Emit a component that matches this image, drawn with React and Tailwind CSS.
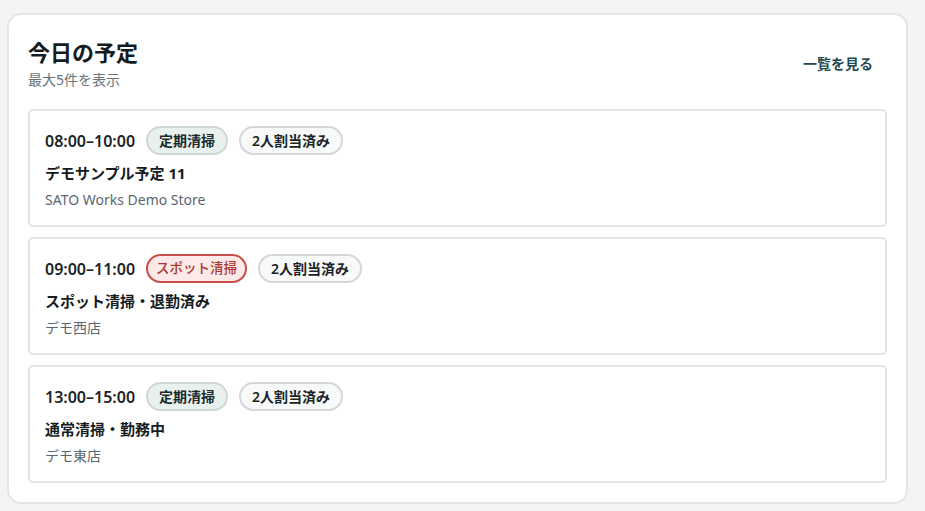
import React from 'react';

const schedules = [
  {
    time: '08:00–10:00',
    kind: '定期清掃',
    spot: false,
    staff: '2人割当済み',
    title: 'デモサンプル予定 11',
    place: 'SATO Works Demo Store',
  },
  {
    time: '09:00–11:00',
    kind: 'スポット清掃',
    spot: true,
    staff: '2人割当済み',
    title: 'スポット清掃・退勤済み',
    place: 'デモ西店',
  },
  {
    time: '13:00–15:00',
    kind: '定期清掃',
    spot: false,
    staff: '2人割当済み',
    title: '通常清掃・勤務中',
    place: 'デモ東店',
  },
];

const ScheduleItem = ({ item }) => (
  <div className="rounded-[5px] border-2 border-[#e1e5e3] bg-white px-[15px] pt-[15px] pb-[15px]">
    <div className="flex h-[29px] items-center gap-[11px]">
      <span className="text-[16px] font-semibold text-[#1b2326]">{item.time}</span>
      {item.spot ? (
        <span className="rounded-full border-2 border-[#c9504a] bg-[#fde9e8] px-[8px] h-[29px] flex items-center text-[13.5px] font-medium text-[#a8382f]">
          {item.kind}
        </span>
      ) : (
        <span className="rounded-full border-2 border-[#cfd8d4] bg-[#e8f1ed] px-[11px] h-[29px] flex items-center text-[14px] font-semibold text-[#1c2a2d]">
          {item.kind}
        </span>
      )}
      <span className="rounded-full border-2 border-[#d3d8d6] bg-[#f8faf9] px-[11px] h-[29px] flex items-center text-[14px] font-semibold text-[#1c2326]">
        {item.staff}
      </span>
    </div>
    <div className="mt-[7px] flex h-[22px] items-center text-[15px] font-bold text-[#151c1f]">{item.title}</div>
    <div className="mt-[5px] flex h-[21px] items-center text-[14px] text-[#5b6770]">{item.place}</div>
  </div>
);

export default function App() {
  return (
    <div
      className="min-h-[511px] bg-[#f3f5f4] pl-[7px] pr-[17px] pt-[13px] pb-[8px]"
      style={{ fontFamily: '"Noto Sans", "Noto Sans CJK JP", sans-serif' }}
    >
      <div className="rounded-[14px] border-2 border-[#e3e6e4] bg-white px-[19px] pt-[22px] pb-[19px]">
        <div className="flex items-start justify-between">
          <div>
            <h2 className="text-[22px] font-bold leading-[30px] text-[#151c1f]">今日の予定</h2>
            <p className="mt-[3px] text-[14px] leading-[20px] text-[#66737a]">最大5件を表示</p>
          </div>
          <a className="mt-[16px] mr-[14px] text-[14px] font-bold text-[#1d4a55]">一覧を見る</a>
        </div>
        <div className="mt-[19px] flex flex-col gap-[10px]">
          {schedules.map((item, i) => (
            <ScheduleItem key={i} item={item} />
          ))}
        </div>
      </div>
    </div>
  );
}
